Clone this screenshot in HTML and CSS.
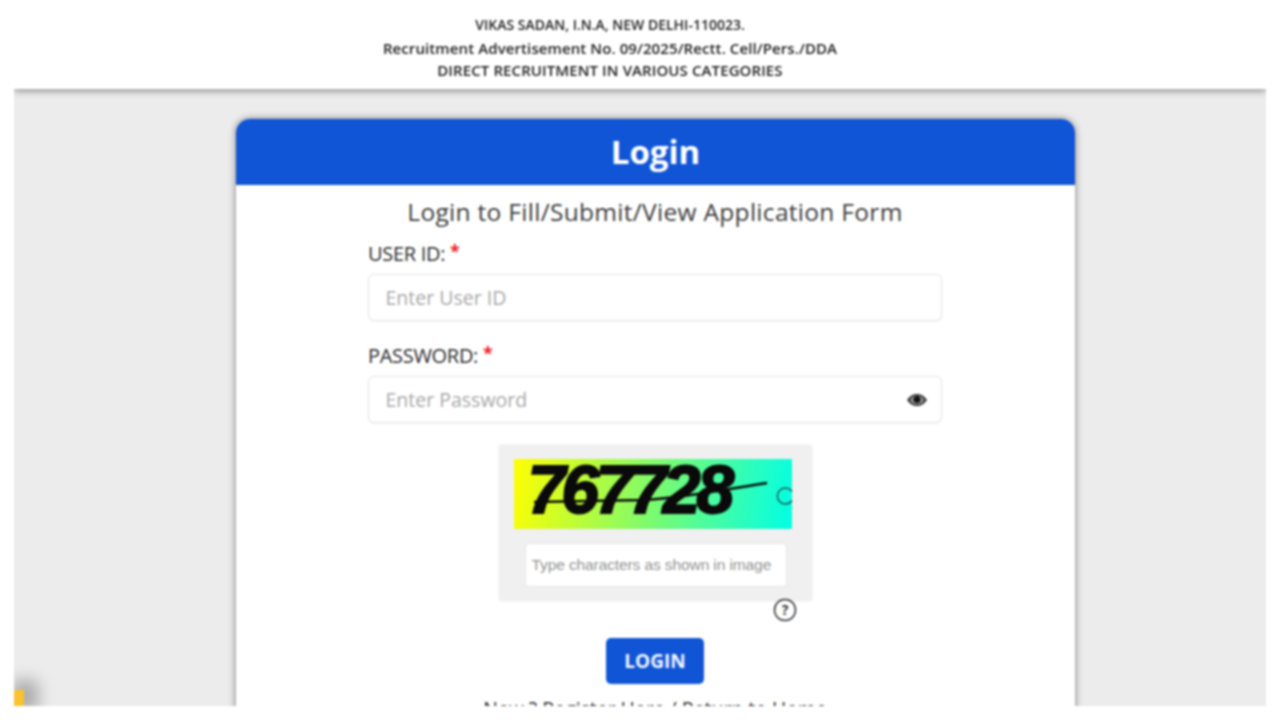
FILE: index.html
```html
<!DOCTYPE html>
<html>
<head>
  <meta name="viewport" content="width=device-width, initial-scale=1">
  <title>Login</title>
  <link rel="stylesheet" href="styles.css">
</head>
<body>
  <div class="screen">
    <div class="header">
      <p class="header-line line-address">VIKAS SADAN, I.N.A, NEW DELHI-110023.</p>
      <p class="header-line">Recruitment Advertisement No. 09/2025/Rectt. Cell/Pers./DDA</p>
      <p class="header-line">DIRECT RECRUITMENT IN VARIOUS CATEGORIES</p>
    </div>

    <div class="main">
      <div class="card">
        <div class="card-title">Login</div>
        <div class="card-body">
          <h2 class="subtitle">Login to Fill/Submit/View Application Form</h2>

          <div class="field">
            <label class="field-label">USER ID: <span class="req">*</span></label>
            <input class="text-input" type="text" placeholder="Enter User ID">
          </div>

          <div class="field">
            <label class="field-label">PASSWORD: <span class="req">*</span></label>
            <div class="password-wrap">
              <input class="text-input" type="password" placeholder="Enter Password">
              <svg class="eye" viewBox="0 0 20 14" width="20" height="14">
                <path d="M0 7C3 2.500 6.500 1 10 1s7 1.500 10 6c-3 4.500-6.500 6-10 6S3 11.500 0 7z" fill="#3a3a3a"/>
                <ellipse cx="10" cy="7" rx="6.500" ry="4.300" fill="#9a9a9a"/>
                <circle cx="10" cy="6.500" r="3.600" fill="#111"/>
              </svg>
            </div>
          </div>

          <div class="captcha-box">
            <div class="captcha-img">
              <span class="captcha-text">767728</span>
              <svg class="captcha-strike" viewBox="0 0 278 70" width="278" height="70">
                <path d="M20 43L130 41C170 39 200 32 253 24" fill="none" stroke="#0a0a0a" stroke-width="2.500"/>
              </svg>
              <svg class="captcha-refresh" viewBox="0 0 20 20" width="20" height="20">
                <path d="M17 5.500A8 8 0 1 0 17 14.500" fill="none" stroke="#1a5a5a" stroke-width="1.500"/>
              </svg>
            </div>
            <input class="captcha-input" type="text" placeholder="Type characters as shown in image">
          </div>

          <div class="help-row">
            <svg viewBox="0 0 24 24" width="24" height="24">
              <circle cx="12" cy="12" r="10.500" fill="#fff" stroke="#333" stroke-width="1.500"/>
              <text x="12" y="17" class="help-mark">?</text>
            </svg>
          </div>

          <button class="login-btn" type="button">LOGIN</button>

          <p class="links">New ? <a href="#">Register Here</a> / <a href="#">Return to Home</a></p>
        </div>
      </div>
      <div class="corner-badge"></div>
    </div>
  </div>
</body>
</html>
```

FILE: styles.css
```css
* {
  box-sizing: border-box;
}

html, body {
  margin: 0;
  height: 720px;
  overflow: hidden;
  background: #fff;
}

body {
  font-family: "Open Sans", "Liberation Sans", sans-serif;
}

.screen {
  height: 706px;
  margin: 0 14px;
  display: flex;
  flex-direction: column;
  overflow: hidden;
  filter: blur(0.8px);
}

.header {
  height: 89px;
  flex: none;
  padding: 14px 60px 0 0;
  background: #fff;
  text-align: center;
  position: relative;
  z-index: 2;
  box-shadow: 0 2px 7px rgba(0, 0, 0, 0.4);
}

.header-line {
  margin: 0;
  height: 22.500px;
  line-height: 22.500px;
  font-size: 15px;
  font-weight: 600;
  letter-spacing: 0.1px;
  color: #222;
}

.header-line.line-address {
  font-size: 14px;
  letter-spacing: 0;
}

.main {
  flex: 1;
  position: relative;
  min-height: 0;
  padding: 30px 190px 0 222px;
  background: #ececec;
  overflow: hidden;
}

.card {
  width: 839px;
  height: 640px;
  background: #fff;
  border-radius: 14px 14px 0 0;
  box-shadow: 0 0 7px rgba(0, 0, 0, 0.5);
}

.card-title {
  height: 66px;
  line-height: 65px;
  background: #1055d6;
  border-radius: 14px 14px 0 0;
  color: #fff;
  font-size: 33px;
  font-weight: 700;
  text-align: center;
}

.card-body {
  display: flex;
  flex-direction: column;
  align-items: center;
  padding: 11px 1px 0 0;
}

.subtitle {
  margin: 0;
  height: 32px;
  line-height: 32px;
  font-size: 24.500px;
  font-weight: 400;
  letter-spacing: 0.3px;
  color: #3c3c3c;
}

.field {
  width: 574px;
  margin-top: 12px;
}

.field + .field {
  margin-top: 21px;
}

.field-label {
  display: block;
  height: 34px;
  line-height: 28px;
  font-size: 20px;
  letter-spacing: -0.3px;
  color: #2b2b2b;
}

.req {
  color: #ee1c25;
  font-weight: 700;
  font-size: 18px;
  position: relative;
  top: -3px;
}

.text-input {
  display: block;
  width: 100%;
  height: 47px;
  padding: 0 16.500px;
  border: 1.500px solid #e4e4e4;
  border-radius: 6px;
  background: #fff;
  font-family: inherit;
  font-size: 19.500px;
  color: #333;
  box-shadow: 0 1px 2px rgba(0, 0, 0, 0.04);
}

.text-input::placeholder {
  color: #a8a8a8;
  opacity: 1;
}

.password-wrap {
  position: relative;
}

.eye {
  position: absolute;
  right: 15px;
  top: 17px;
}

.captcha-box {
  width: 313px;
  height: 156px;
  margin-top: 22px;
  padding: 14px 0 0 15px;
  background: #f0f0f0;
  border-radius: 3px;
  box-shadow: 0 0 2px rgba(0, 0, 0, 0.12);
}

.captcha-img {
  position: relative;
  width: 278px;
  height: 70px;
  padding-left: 14px;
  background: linear-gradient(100deg, #ffff00 0%, #7dfb6d 50%, #00ffe6 100%);
}

.captcha-text {
  display: block;
  font-family: "Liberation Sans", sans-serif;
  font-size: 68px;
  font-weight: 700;
  font-style: italic;
  line-height: 60px;
  letter-spacing: -4px;
  color: #0a0a0a;
  -webkit-text-stroke: 2px #0a0a0a;
}

.captcha-strike {
  position: absolute;
  left: 0;
  top: 0;
}

.captcha-refresh {
  position: absolute;
  left: 261px;
  top: 27px;
}

.captcha-input {
  display: block;
  width: 262px;
  height: 44px;
  margin: 14px 0 0 11px;
  padding: 0 6px;
  border: 1.500px solid #e6e6e6;
  border-radius: 4px;
  background: #fff;
  font-family: "Liberation Sans", sans-serif;
  font-size: 15.500px;
  letter-spacing: -0.1px;
}

.captcha-input::placeholder {
  color: #939393;
  opacity: 1;
}

.help-row {
  width: 313px;
  height: 24px;
  margin-top: -3px;
  padding-left: 274px;
}

.help-row svg {
  display: block;
}

.help-mark {
  font-family: "Open Sans", sans-serif;
  font-size: 14px;
  font-weight: 700;
  text-anchor: middle;
  fill: #333;
}

.login-btn {
  width: 98px;
  height: 46px;
  margin-top: 16px;
  border: 0;
  border-radius: 5px;
  background: #1055d6;
  color: #f2f6ff;
  font-family: inherit;
  font-size: 19px;
  font-weight: 700;
}

.links {
  margin: 12px 0 0;
  font-size: 19.400px;
  line-height: 26px;
  color: #333;
}

.links a {
  color: #333;
  text-decoration: none;
}

.corner-badge {
  position: absolute;
  left: 0;
  bottom: 0;
  width: 10px;
  height: 16px;
  background: #f9c22e;
  box-shadow: 6px -2px 16px 8px rgba(0, 0, 0, 0.28);
}
```
